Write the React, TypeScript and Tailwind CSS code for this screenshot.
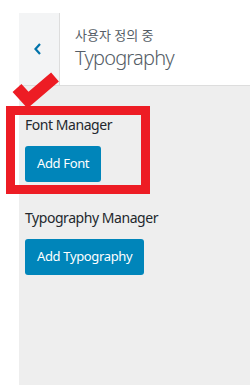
import React from 'react';

const font = { fontFamily: '"Noto Sans", "Noto Sans CJK KR", sans-serif' };

function BackButton() {
  return (
    <div className="w-[41px] shrink-0 bg-[#f3f4f5] border-r border-[#dddddd] flex items-center justify-center">
      <svg width="10" height="14" viewBox="0 0 10 14" className="mr-[2px]">
        <path d="M7 2 L2.5 7 L7 12" fill="none" stroke="#0073aa" strokeWidth="2.2" />
      </svg>
    </div>
  );
}

export default function App() {
  return (
    <div className="relative w-[250px] h-[385px] bg-white overflow-hidden" style={font}>
      <div className="flex flex-col h-full pt-[13px] pl-[19px]">
        {/* Header */}
        <div className="flex h-[73px] shrink-0 bg-white border-b border-[#dddddd]">
          <BackButton />
          <div className="pl-[15px] pt-[12px]">
            <p className="text-[13px] leading-[20px] text-[#555d66]">사용자 정의 중</p>
            <p className="text-[20px] leading-[26px] font-light tracking-[-0.8px] text-[#555d66]">Typography</p>
          </div>
        </div>

        {/* Body */}
        <div className="flex-1 bg-[#eeeeee] px-[6px] pt-[29px]">
          <p className="text-[14px] leading-[20px] tracking-[-0.45px] text-[#23282d]">Font Manager</p>
          <button className="mt-[11px] h-[36px] px-[12px] rounded-[3px] bg-[#0085ba] text-white text-[13px] tracking-[-0.35px]">
            Add Font
          </button>

          <p className="mt-[26px] text-[14px] leading-[20px] tracking-[-0.45px] text-[#23282d]">Typography Manager</p>
          <button className="mt-[11px] h-[36px] px-[12px] rounded-[3px] bg-[#0085ba] text-white text-[13px] tracking-[-0.35px]">
            Add Typography
          </button>
        </div>
      </div>

      {/* Annotation: red box */}
      <div className="absolute left-[6px] top-[106px] w-[144px] h-[88px] border-[9px] border-[#ed1c24]" />
      {/* Annotation: red check */}
      <svg className="absolute left-0 top-[64px]" width="70" height="44" viewBox="0 0 70 44">
        <path d="M17 24 L28 36 L55 13" fill="none" stroke="#ed1c24" strokeWidth="12" strokeLinecap="butt" strokeLinejoin="miter" />
      </svg>
    </div>
  );
}
